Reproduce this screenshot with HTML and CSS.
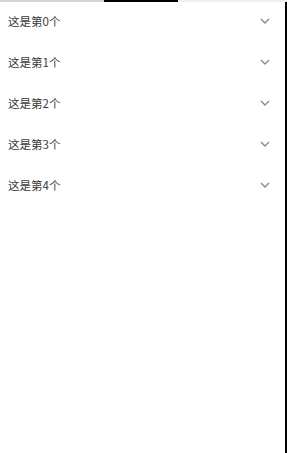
FILE: index.html
```html
<!DOCTYPE html>
<html lang="zh">
<head>
    <meta charset="UTF-8">
    <meta name="viewport" content="width=device-width, initial-scale=1.0">
    <title>列表</title>
    <link rel="stylesheet" href="styles.css">
</head>
<body>
    <div id="topbar">
        <div class="seg seg-gray"></div>
        <div class="seg seg-dark"></div>
        <div class="seg seg-light"></div>
    </div>
    <main id="page">
        <div class="list">
            <div class="item"><span class="label">这是第0个</span><svg class="arrow" viewBox="0 0 10 6"><path d="M1 1l4 4 4-4"/></svg></div>
            <div class="item"><span class="label">这是第1个</span><svg class="arrow" viewBox="0 0 10 6"><path d="M1 1l4 4 4-4"/></svg></div>
            <div class="item"><span class="label">这是第2个</span><svg class="arrow" viewBox="0 0 10 6"><path d="M1 1l4 4 4-4"/></svg></div>
            <div class="item"><span class="label">这是第3个</span><svg class="arrow" viewBox="0 0 10 6"><path d="M1 1l4 4 4-4"/></svg></div>
            <div class="item"><span class="label">这是第4个</span><svg class="arrow" viewBox="0 0 10 6"><path d="M1 1l4 4 4-4"/></svg></div>
        </div>
    </main>
</body>
</html>
```
FILE: styles.css
```css
html, body {
    height: 100%;
}
body {
    margin: 0;
    background-color: white;
    display: flex;
    flex-direction: column;
    font-family: "Noto Sans CJK SC", "Noto Sans", sans-serif;
}
#topbar {
    display: flex;
    height: 2px;
    flex: 0 0 2px;
}
.seg-gray {
    width: 104px;
    background-color: #d4d4d4;
}
.seg-dark {
    width: 74px;
    background-color: #000;
}
.seg-light {
    flex: 1;
    background-color: #eef0f8;
}
#page {
    flex: 1;
    border-right: 2px solid #000;
}
.item {
    height: 41px;
    display: flex;
    align-items: center;
    justify-content: space-between;
    padding: 0 15px 0 8px;
    margin-top: -2px;
    margin-bottom: 2px;
}
.label {
    font-size: 11.5px;
    color: #3a3a3a;
}
.arrow {
    width: 10px;
    height: 6px;
    fill: none;
    stroke: #8a8a8a;
    stroke-width: 1.4;
}
```
